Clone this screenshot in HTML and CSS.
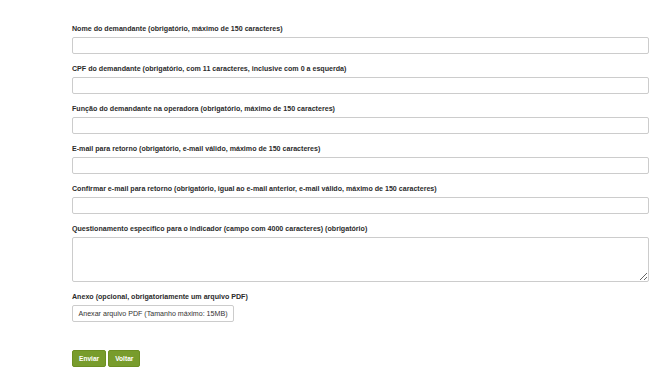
FILE: index.html
```html
<!DOCTYPE html>
<html lang="pt-BR">

<head>
    <meta charset="UTF-8">
    <meta name="viewport" content="width=device-width, initial-scale=1.0">
    <title>Questionamento do indicador</title>
    <link rel="stylesheet" href="styles.css">
</head>

<body>
    <form class="form-demanda">
        <div class="campo">
            <label for="nome">Nome do demandante (obrigatório, máximo de 150 caracteres)</label>
            <input type="text" id="nome" class="entrada">
        </div>
        <div class="campo">
            <label for="cpf">CPF do demandante (obrigatório, com 11 caracteres, inclusive com 0 a esquerda)</label>
            <input type="text" id="cpf" class="entrada">
        </div>
        <div class="campo">
            <label for="funcao">Função do demandante na operadora (obrigatório, máximo de 150 caracteres)</label>
            <input type="text" id="funcao" class="entrada">
        </div>
        <div class="campo">
            <label for="email">E-mail para retorno (obrigatório, e-mail válido, máximo de 150 caracteres)</label>
            <input type="text" id="email" class="entrada">
        </div>
        <div class="campo">
            <label for="email2">Confirmar e-mail para retorno (obrigatório, igual ao e-mail anterior, e-mail válido, máximo de 150 caracteres)</label>
            <input type="text" id="email2" class="entrada">
        </div>
        <div class="campo">
            <label for="questao">Questionamento específico para o indicador (campo com 4000 caracteres) (obrigatório)</label>
            <textarea id="questao" class="entrada texto"></textarea>
        </div>
        <div class="campo anexo">
            <label>Anexo (opcional, obrigatoriamente um arquivo PDF)</label>
            <button type="button" class="btn-anexo">Anexar arquivo PDF (Tamanho máximo: 15MB)</button>
        </div>
        <div class="acoes">
            <button type="button" class="btn-verde">Enviar</button>
            <button type="button" class="btn-verde">Voltar</button>
        </div>
    </form>
</body>

</html>
```

FILE: styles.css
```css
/* base */
body {
    margin: 0;
    background-color: #fff;
    font-family: "Liberation Sans", Arial, sans-serif;
    color: #333;
}

.form-demanda {
    width: 577px;
    padding: 23px 0 0 72px;
}

.campo {
    margin-bottom: 9px;
}

.campo label {
    display: block;
    font-size: 7.1px;
    font-weight: bold;
    line-height: 12px;
    margin-bottom: 2px;
    white-space: nowrap;
    color: #2b2b2b;
}

.entrada {
    display: block;
    box-sizing: border-box;
    width: 100%;
    height: 17px;
    margin: 0;
    border: 1px solid #ccc;
    border-radius: 2px;
    background-color: #fff;
}

.entrada.texto {
    height: 45px;
    resize: both;
}

.campo.anexo {
    margin-top: 9px;
}

.btn-anexo {
    display: block;
    box-sizing: border-box;
    height: 17px;
    width: 162px;
    padding: 0;
    border: 1px solid #ccc;
    border-radius: 2px;
    background-color: #fff;
    color: #333;
    font-family: "Liberation Sans", Arial, sans-serif;
    font-size: 7.1px;
}

.acoes {
    display: flex;
    gap: 2px;
    margin-top: 28px;
}

.btn-verde {
    box-sizing: border-box;
    height: 17px;
    padding: 0 6px;
    border: 1px solid #6d8f22;
    border-radius: 2px;
    background-color: #789c2c;
    color: #fff;
    font-family: "Liberation Sans", Arial, sans-serif;
    font-size: 6.6px;
    font-weight: bold;
}
```
